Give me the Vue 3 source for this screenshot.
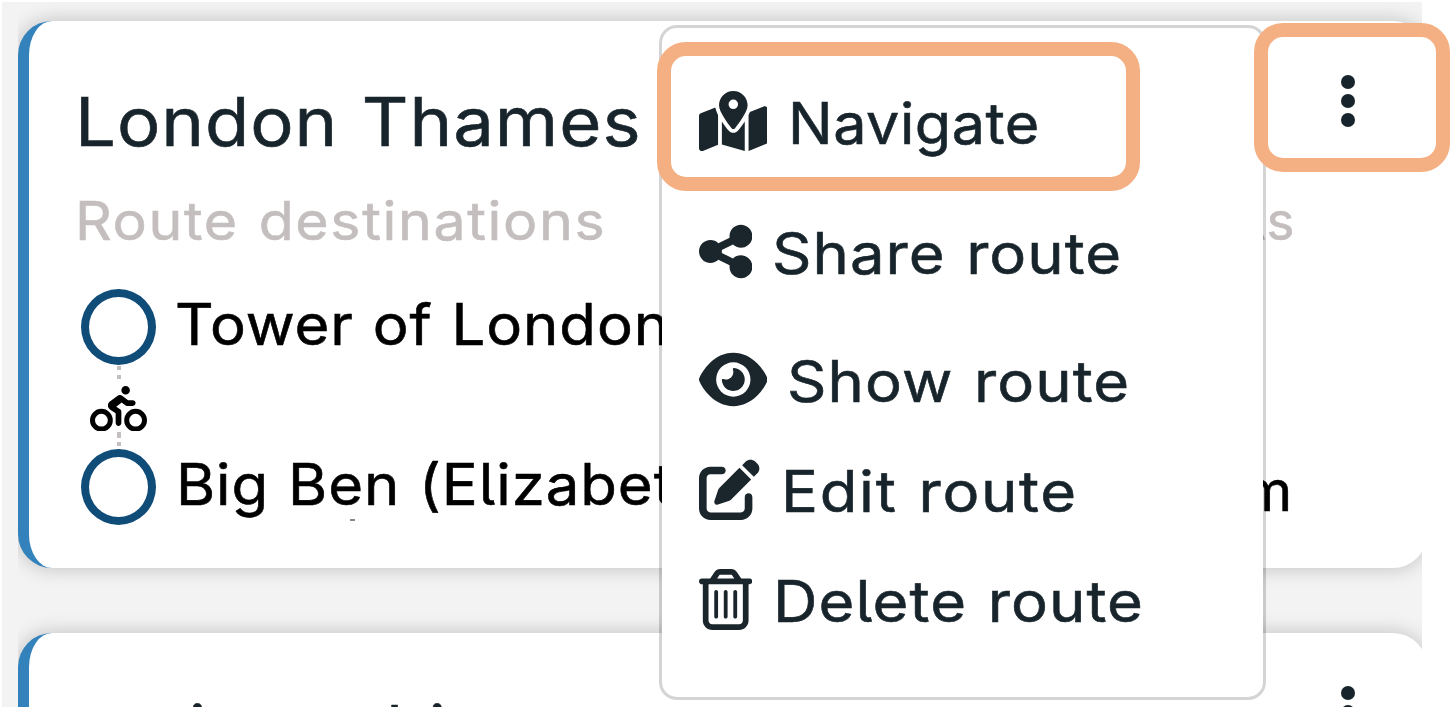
<script setup>
const menu = [
  {
    label: 'Navigate', key: 'navigate', box: '0 0 576 512',
    path: 'M408 120c0 54.6-73.1 151.9-105.2 192c-7.7 9.6-22 9.6-29.6 0C241.1 271.9 168 174.6 168 120C168 53.7 221.7 0 288 0s120 53.7 120 120zm8 80.4c3.5-6.9 6.7-13.8 9.6-20.6c.5-1.2 1-2.5 1.5-3.7l116-46.4C558.9 123.4 576 135 576 152V422.8c0 9.8-6 18.6-15.1 22.3L416 503V200.4zM137.6 138.3c2.4 14.1 7.2 28.3 12.8 41.5c2.9 6.8 6.1 13.7 9.6 20.6V451.8L32.9 502.7C17.1 509 0 497.4 0 480.4V209.6c0-9.8 6-18.6 15.1-22.3l122.6-49zM327.8 332c13.9-17.4 35.7-45.7 56.2-77V504.3L192 449.4V255c20.5 31.3 42.3 59.6 56.2 77c20.5 25.6 59.1 25.6 79.6 0zM288 152a40 40 0 1 0 0-80 40 40 0 1 0 0 80z'
  },
  {
    label: 'Share route', key: 'share', box: '0 0 448 512',
    path: 'M352 224c53 0 96-43 96-96s-43-96-96-96s-96 43-96 96c0 4 .2 8 .7 11.9l-94.1 47C145.4 170.2 121.9 160 96 160c-53 0-96 43-96 96s43 96 96 96c25.9 0 49.4-10.2 66.6-26.9l94.1 47c-.5 3.9-.7 7.8-.7 11.9c0 53 43 96 96 96s96-43 96-96s-43-96-96-96c-25.9 0-49.4 10.2-66.6 26.9l-94.1-47c.5-3.9 .7-7.8 .7-11.9s-.2-8-.7-11.9l94.1-47C302.6 213.8 326.1 224 352 224z'
  },
  {
    label: 'Show route', key: 'show', box: '0 0 576 512',
    path: 'M288 32c-80.8 0-145.5 36.8-192.6 80.6C48.6 156 17.3 208 2.5 243.7c-3.3 7.9-3.3 16.7 0 24.6C17.3 304 48.6 356 95.4 399.4C142.5 443.2 207.2 480 288 480s145.5-36.8 192.6-80.6c46.8-43.5 78.1-95.4 93-131.1c3.3-7.9 3.3-16.7 0-24.6c-14.9-35.7-46.2-87.7-93-131.1C433.5 68.8 368.8 32 288 32zM144 256a144 144 0 1 1 288 0 144 144 0 1 1 -288 0zm144-64c0 35.3-28.7 64-64 64c-7.1 0-13.9-1.2-20.3-3.3c-5.5-1.8-11.9 1.6-11.7 7.4c.3 6.9 1.3 13.8 3.2 20.7c13.7 51.2 66.4 81.6 117.6 67.9s81.6-66.4 67.9-117.6c-11.1-41.5-47.8-69.4-88.6-71.1c-5.8-.2-9.2 6.1-7.4 11.7c2.1 6.4 3.3 13.2 3.3 20.3z'
  },
  {
    label: 'Edit route', key: 'edit', box: '0 0 512 512',
    path: 'M471.6 21.7c-21.9-21.9-57.3-21.9-79.2 0L362.3 51.7l97.9 97.9 30.1-30.1c21.9-21.9 21.9-57.3 0-79.2L471.6 21.7zm-299.2 220c-6.1 6.1-10.8 13.6-13.5 21.9l-29.6 88.8c-2.9 8.6-.6 18.1 5.8 24.6s15.9 8.7 24.6 5.8l88.8-29.6c8.2-2.7 15.7-7.4 21.9-13.5L437.7 172.3 339.7 74.3 172.4 241.7zM96 64C43 64 0 107 0 160V416c0 53 43 96 96 96H352c53 0 96-43 96-96V320c0-17.7-14.3-32-32-32s-32 14.3-32 32v96c0 17.7-14.3 32-32 32H96c-17.7 0-32-14.3-32-32V160c0-17.7 14.3-32 32-32h96c17.7 0 32-14.3 32-32s-14.3-32-32-32H96z'
  },
  {
    label: 'Delete route', key: 'delete', box: '0 0 448 512',
    path: 'M170.5 51.6L151.5 80h145l-19-28.4c-1.5-2.2-4-3.6-6.7-3.6H177.1c-2.7 0-5.2 1.3-6.7 3.6zm147-26.6L354.2 80H368h48 8c13.3 0 24 10.7 24 24s-10.7 24-24 24h-8V432c0 44.2-35.8 80-80 80H112c-44.2 0-80-35.8-80-80V128H24c-13.3 0-24-10.7-24-24S10.7 80 24 80h8H80 93.8l36.7-55.1C140.9 9.4 158.4 0 177.1 0h93.7c18.7 0 36.2 9.4 46.6 24.9zM80 128V432c0 17.7 14.3 32 32 32H336c17.7 0 32-14.3 32-32V128H80zm80 64V400c0 8.8-7.2 16-16 16s-16-7.2-16-16V192c0-8.8 7.2-16 16-16s16 7.2 16 16zm80 0V400c0 8.8-7.2 16-16 16s-16-7.2-16-16V192c0-8.8 7.2-16 16-16s16 7.2 16 16zm80 0V400c0 8.8-7.2 16-16 16s-16-7.2-16-16V192c0-8.8 7.2-16 16-16s16 7.2 16 16z'
  }
]
</script>

<template>
  <div class="screen">
    <main class="panel">
      <div class="list">
        <article class="card">
          <header class="head">
            <h2 class="title">London Thames</h2>
            <div class="kebab"><i></i><i></i><i></i></div>
          </header>
          <div class="subhead">
            <span class="wide">Route destinations</span>
            <span>Details</span>
          </div>
          <div class="stop">
            <span class="ring"></span>
            <span class="place tower">Tower of London</span>
          </div>
          <div class="link">
            <span class="dash"></span>
            <svg class="bike" viewBox="0 0 640 512">
              <path d="M400 96a48 48 0 1 0 0-96 48 48 0 1 0 0 96zm27.2 64l-61.8-48.8c-17.3-13.6-41.7-13.8-59.1-.3l-83.1 64.2c-30.7 23.8-28.5 70.8 4.3 91.6L288 305.1V416c0 17.7 14.3 32 32 32s32-14.3 32-32V288c0-10.7-5.3-20.7-14.2-26.6L295 232.9l60.3-48.5L396 217c5.7 4.5 12.7 7 20 7h64c17.7 0 32-14.3 32-32s-14.3-32-32-32H427.2zM56 384a72 72 0 1 1 144 0A72 72 0 1 1 56 384zm200 0A128 128 0 1 0 0 384a128 128 0 1 0 256 0zm184 0a72 72 0 1 1 144 0 72 72 0 1 1 -144 0zm200 0a128 128 0 1 0 -256 0 128 128 0 1 0 256 0z" />
            </svg>
            <span class="dash low"></span>
          </div>
          <div class="stop">
            <span class="ring"></span>
            <span class="place">Big Ben (Elizabeth</span>
            <span class="distance">km</span>
          </div>
          <span class="speck"></span>
        </article>

        <article class="card next">
          <header class="head">
            <h2 class="title">paris sushi</h2>
            <div class="kebab"><i></i><i></i><i></i></div>
          </header>
        </article>
      </div>
    </main>

    <nav class="menu">
      <div v-for="m in menu" :key="m.key" class="item" :class="m.key">
        <svg class="icon" :viewBox="m.box"><path :d="m.path" /></svg>
        <span class="label">{{ m.label }}</span>
      </div>
    </nav>

    <div class="mark mark-navigate"></div>
    <div class="mark mark-kebab"></div>
  </div>
</template>

<style>
body {
  background: #fff;
  overflow: hidden;
}
</style>

<style scoped>
.screen {
  position: relative;
  box-sizing: border-box;
  width: 1452px;
  height: 710px;
  padding: 2px 30px 3px 2px;
  overflow: hidden;
  font-family: Inter, "Open Sans", sans-serif;
  font-feature-settings: "cv05";
  -webkit-text-stroke: 0.6px currentColor;
  white-space: nowrap;
}
.panel {
  height: 705px;
  background: #f3f3f3;
  padding-left: 16px;
}
.list {
  width: 1404px;
  height: 705px;
  overflow: hidden;
  padding-top: 18.5px;
  box-sizing: border-box;
}
.card {
  position: relative;
  box-sizing: border-box;
  width: 1409px;
  height: 547.5px;
  padding: 61px 0 0 46px;
  border-left: 11px solid #3382bb;
  border-radius: 34px;
  background: #fff;
  box-shadow: 0 0 20px rgba(0, 0, 0, 0.22);
}
.next {
  margin-top: 65px;
  padding-top: 57px;
}
.head {
  display: flex;
  justify-content: space-between;
  height: 80px;
}
.title {
  margin: 0;
  font-size: 67px;
  font-weight: 400;
  line-height: 80px;
  letter-spacing: 0.9px;
  word-spacing: 2px;
  color: #18242b;
  transform: scaleX(1.08);
  transform-origin: left;
}
.next .title {
  letter-spacing: 2.9px;
  word-spacing: -1px;
  transform: none;
}
.kebab {
  display: flex;
  flex-direction: column;
  gap: 5px;
  width: 14px;
  margin: -6.5px 72px 0 0;
}
.next .kebab {
  margin-top: -4px;
}
.kebab i {
  width: 14px;
  height: 14px;
  border-radius: 50%;
  background: #18242b;
}
.subhead {
  display: flex;
  justify-content: space-between;
  width: 1221px;
  margin-top: 27px;
  font-size: 53px;
  line-height: 64px;
  letter-spacing: 1.5px;
  word-spacing: 2px;
  color: #c4bfbe;
}
.wide {
  transform: scaleX(1.08);
  transform-origin: left;
}
.subhead + .stop {
  margin-top: 36.5px;
}
.stop {
  display: flex;
  width: 1212px;
  height: 75px;
  padding-left: 6px;
}
.ring {
  box-sizing: border-box;
  width: 75px;
  height: 76px;
  flex: none;
  border: 8px solid #0f4c78;
  border-radius: 50%;
}
.place,
.distance {
  font-size: 57px;
  line-height: 72px;
  letter-spacing: 0.9px;
  color: #000;
}
.place {
  margin-left: 19.5px;
  word-spacing: 1px;
  transform: scaleX(1.05);
  transform-origin: left;
}
.tower {
  margin-left: 18.5px;
}
.distance {
  margin: 6px 0 0 auto;
}
.link {
  display: flex;
  flex-direction: column;
  align-items: center;
  width: 75px;
  height: 85px;
  padding-left: 6px;
}
.dash {
  width: 4px;
  height: 14px;
  margin-top: 2px;
  background: linear-gradient(#c4bfbe 4px, transparent 4px 9px, #c4bfbe 9px 13px, transparent 13px);
}
.low {
  margin-top: 1px;
  background: linear-gradient(#c4bfbe 6px, transparent 6px 10px, #c4bfbe 10px);
}
.bike {
  width: 57px;
  height: 45.6px;
  margin-top: 5.5px;
}
.speck {
  position: absolute;
  left: 321px;
  top: 498.5px;
  width: 5px;
  height: 2px;
  background: #888;
}
.menu {
  position: absolute;
  left: 658.5px;
  top: 25px;
  box-sizing: border-box;
  width: 607px;
  height: 675px;
  padding: 59.5px 0 0 37px;
  border: 3px solid rgba(0, 0, 0, 0.17);
  border-radius: 18px;
  background: #fff;
  background-clip: padding-box;
}
.item {
  display: flex;
  align-items: flex-start;
  height: 72px;
  color: #18242b;
}
.icon {
  height: 61px;
  flex: none;
  margin-top: 3px;
  fill: #1b262c;
}
.label {
  font-size: 57px;
  line-height: 72px;
  word-spacing: 2px;
  transform: scaleX(1.08);
  transform-origin: left;
}
.navigate .label { margin-left: 21px; letter-spacing: 0.5px; transform: scaleX(1.04); }
.share { margin-top: 58px; }
.share .label { margin-left: 20.5px; letter-spacing: 0.95px; }
.show { margin-top: 56px; }
.show .label { margin-left: 20px; letter-spacing: 1px; }
.edit { margin-top: 38px; }
.edit .label { margin-left: 21.5px; letter-spacing: 1.55px; }
.delete { margin-top: 38px; }
.delete .label { margin-left: 21.5px; letter-spacing: 1px; }
.mark {
  position: absolute;
  box-sizing: border-box;
  border: 14px solid #f4b083;
  border-radius: 29px;
}
.mark-navigate {
  left: 657px;
  top: 42px;
  width: 483px;
  height: 149px;
}
.mark-kebab {
  left: 1254px;
  top: 23px;
  width: 196px;
  height: 149px;
}
</style>
